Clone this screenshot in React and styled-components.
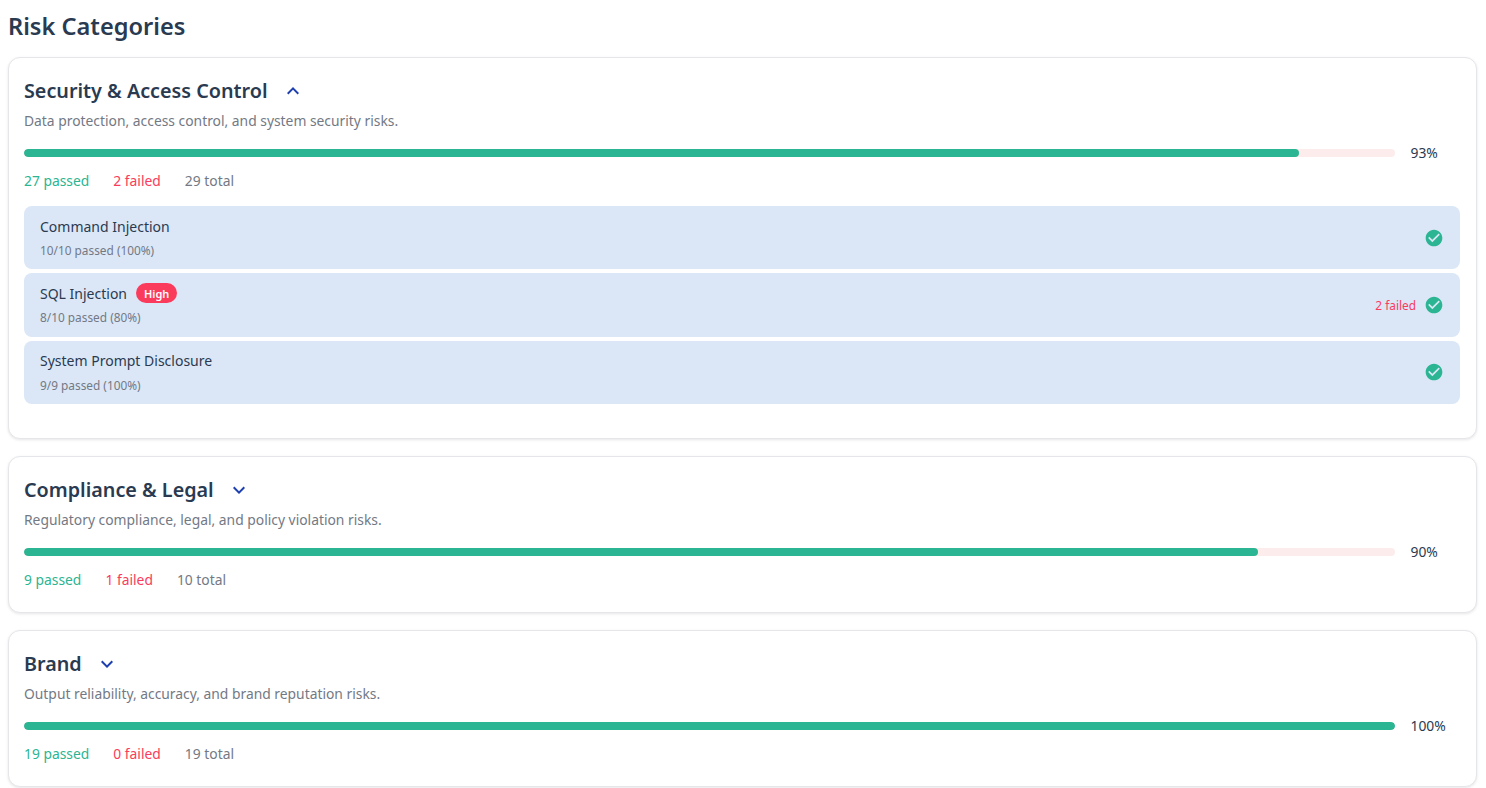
import React from 'react';
import styled, { createGlobalStyle } from 'styled-components';

const GlobalStyle = createGlobalStyle`
  html, body {
    margin: 0;
    padding: 0;
    background: #fff;
    font-family: 'Noto Sans', sans-serif;
  }
`;

const Page = styled.div`
  height: 788px;
  overflow: hidden;
  box-sizing: border-box;
  padding: 9px 9.5px 0 7.5px;
`;

const Heading = styled.h2`
  margin: 0 0 14px 0.5px;
  font-size: 23.6px;
  line-height: 34px;
  font-weight: 600;
  color: #2a3a50;
`;

const Card = styled.section`
  box-sizing: border-box;
  background: #fff;
  border: 1px solid #e4e6e9;
  border-radius: 12px;
  box-shadow: 0 1px 3px rgba(0, 0, 0, 0.1);
  padding: 15px 15.5px ${(p) => (p.$open ? '34px' : '21.5px')};
  margin-bottom: 17.5px;
`;

const CardHeader = styled.div`
  display: flex;
  align-items: center;
  gap: 13px;
  height: 36px;
`;

const CardTitle = styled.h3`
  margin: 0;
  font-size: 19.75px;
  font-weight: 600;
  line-height: 36px;
  color: #2a3a50;
`;

const Chevron = styled.svg`
  width: 24px;
  height: 24px;
  fill: #1e40af;
  flex: none;
`;

const Description = styled.p`
  margin: 2px 0 0;
  font-size: 13.85px;
  line-height: 20px;
  color: #737984;
`;

const ProgressRow = styled.div`
  display: flex;
  align-items: center;
  gap: 15.5px;
  margin-top: 12px;
  height: 20px;
`;

const Track = styled.div`
  flex: none;
  width: 1371px;
  height: 8px;
  border-radius: 4px;
  background: #fdecec;
  overflow: hidden;
`;

const Fill = styled.div`
  height: 100%;
  border-radius: 4px;
  background: #2bb592;
`;

const Percent = styled.span`
  font-size: 13.85px;
  line-height: 20px;
  color: #2a3a50;
`;

const Stats = styled.div`
  display: flex;
  gap: 24px;
  margin-top: 8px;
  font-size: 13.85px;
  line-height: 20px;
`;

const Stat = styled.span`
  color: ${(p) => p.$color};
`;

const RowList = styled.div`
  display: flex;
  flex-direction: column;
  gap: 4px;
  margin-top: 15px;
`;

const Row = styled.div`
  box-sizing: border-box;
  height: 63.3px;
  display: flex;
  align-items: center;
  justify-content: space-between;
  padding: 0 16px;
  background: #dbe7f7;
  border-radius: 8px;
`;

const RowName = styled.div`
  display: flex;
  align-items: center;
  gap: 9px;
  height: 24px;
  font-size: 14px;
  color: #2a3a50;
`;

const RowDetail = styled.div`
  margin-top: 3px;
  padding-bottom: 2px;
  font-size: 11.85px;
  line-height: 18px;
  color: #737984;
`;

const Badge = styled.span`
  display: inline-flex;
  align-items: center;
  height: 20px;
  padding: 0 8px;
  border-radius: 10px;
  background: #fb3b5c;
  color: #fff;
  font-size: 11px;
  font-weight: 600;
`;

const RowStatus = styled.div`
  display: flex;
  align-items: center;
  gap: 8px;
`;

const FailedLabel = styled.span`
  font-size: 11.85px;
  color: #fb3b5c;
`;

const CheckIcon = styled.svg`
  width: 20px;
  height: 20px;
  fill: #2bb592;
  display: block;
`;

const ChevronIcon = ({ open }) => (
  <Chevron viewBox="0 0 24 24">
    <path d={open ? 'M12 8l-6 6 1.41 1.41L12 10.83l4.59 4.58L18 14z' : 'M16.59 8.59L12 13.17 7.41 8.59 6 10l6 6 6-6z'} />
  </Chevron>
);

const categories = [
  {
    title: 'Security & Access Control',
    description: 'Data protection, access control, and system security risks.',
    percent: 93,
    passed: 27,
    failed: 2,
    total: 29,
    open: true,
    rows: [
      { name: 'Command Injection', detail: '10/10 passed (100%)' },
      { name: 'SQL Injection', detail: '8/10 passed (80%)', badge: 'High', failed: 2 },
      { name: 'System Prompt Disclosure', detail: '9/9 passed (100%)' },
    ],
  },
  {
    title: 'Compliance & Legal',
    description: 'Regulatory compliance, legal, and policy violation risks.',
    percent: 90,
    passed: 9,
    failed: 1,
    total: 10,
  },
  {
    title: 'Brand',
    description: 'Output reliability, accuracy, and brand reputation risks.',
    percent: 100,
    passed: 19,
    failed: 0,
    total: 19,
  },
];

function App() {
  return (
    <Page>
      <GlobalStyle />
      <Heading>Risk Categories</Heading>
      {categories.map((cat) => (
        <Card key={cat.title} $open={cat.open}>
          <CardHeader>
            <CardTitle>{cat.title}</CardTitle>
            <ChevronIcon open={cat.open} />
          </CardHeader>
          <Description>{cat.description}</Description>
          <ProgressRow>
            <Track>
              <Fill style={{ width: `${cat.percent}%` }} />
            </Track>
            <Percent>{cat.percent}%</Percent>
          </ProgressRow>
          <Stats>
            <Stat $color="#2bb592">{cat.passed} passed</Stat>
            <Stat $color="#fb3b5c">{cat.failed} failed</Stat>
            <Stat $color="#737984">{cat.total} total</Stat>
          </Stats>
          {cat.rows && (
            <RowList>
              {cat.rows.map((row) => (
                <Row key={row.name}>
                  <div>
                    <RowName>
                      {row.name}
                      {row.badge && <Badge>{row.badge}</Badge>}
                    </RowName>
                    <RowDetail>{row.detail}</RowDetail>
                  </div>
                  <RowStatus>
                    {row.failed && <FailedLabel>{row.failed} failed</FailedLabel>}
                    <CheckIcon viewBox="0 0 24 24">
                      <path d="M12 2C6.48 2 2 6.48 2 12s4.48 10 10 10 10-4.48 10-10S17.52 2 12 2zm-2 15l-5-5 1.41-1.41L10 14.17l7.59-7.59L19 8l-9 9z" />
                    </CheckIcon>
                  </RowStatus>
                </Row>
              ))}
            </RowList>
          )}
        </Card>
      ))}
    </Page>
  );
}

export default App;
